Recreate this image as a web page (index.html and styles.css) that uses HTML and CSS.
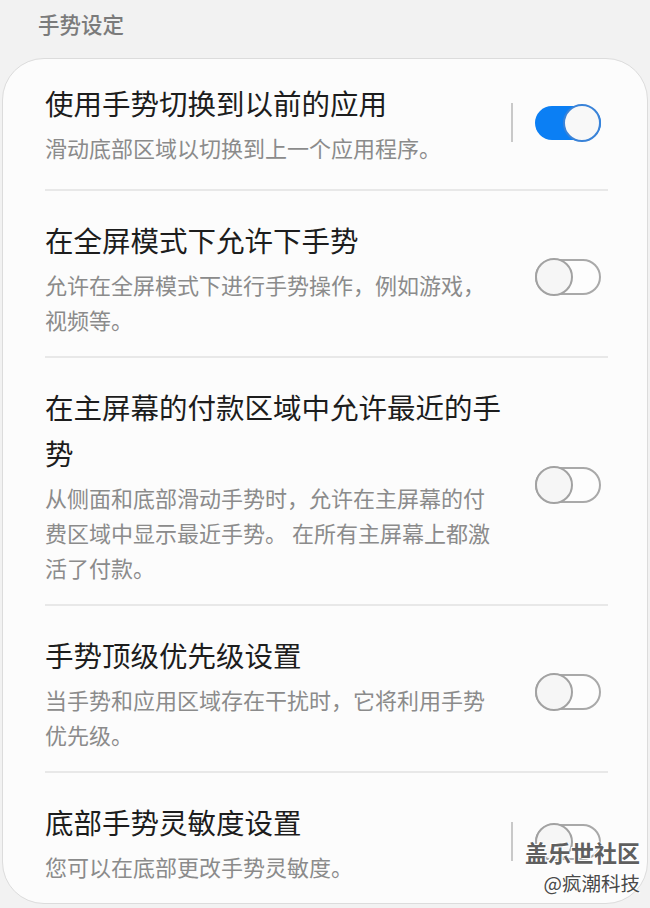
FILE: index.html
```html
<!DOCTYPE html>
<html lang="zh-CN">
<head>
<meta charset="utf-8">
<title>手势设定</title>
<link rel="stylesheet" href="styles.css">
</head>
<body>
<div class="page">
  <div class="section-title">手势设定</div>
  <div class="card">
    <div class="item first">
      <div class="row">
        <div class="text">
          <div class="title">使用手势切换到以前的应用</div>
          <div class="sub">滑动底部区域以切换到上一个应用程序。</div>
        </div>
        <div class="control">
          <span class="vline"></span>
          <span class="switch on"><span class="thumb"></span></span>
        </div>
      </div>
    </div>
    <div class="item">
      <div class="row">
        <div class="text">
          <div class="title">在全屏模式下允许下手势</div>
          <div class="sub">允许在全屏模式下进行手势操作，例如游戏，视频等。</div>
        </div>
        <div class="control">
          <span class="switch off"><span class="thumb"></span></span>
        </div>
      </div>
    </div>
    <div class="item">
      <div class="row">
        <div class="text">
          <div class="title">在主屏幕的付款区域中允许最近的手势</div>
          <div class="sub">从侧面和底部滑动手势时，允许在主屏幕的付费区域中显示最近手势。 在所有主屏幕上都激活了付款。</div>
        </div>
        <div class="control">
          <span class="switch off"><span class="thumb"></span></span>
        </div>
      </div>
    </div>
    <div class="item">
      <div class="row">
        <div class="text">
          <div class="title">手势顶级优先级设置</div>
          <div class="sub">当手势和应用区域存在干扰时，它将利用手势优先级。</div>
        </div>
        <div class="control">
          <span class="switch off"><span class="thumb"></span></span>
        </div>
      </div>
    </div>
    <div class="item last">
      <div class="row">
        <div class="text">
          <div class="title">底部手势灵敏度设置</div>
          <div class="sub">您可以在底部更改手势灵敏度。</div>
        </div>
        <div class="control">
          <span class="vline"></span>
          <span class="switch off"><span class="thumb"></span></span>
        </div>
      </div>
    </div>
  </div>
  <div class="watermark">
    <div class="wm-main">盖乐世社区</div>
    <div class="wm-sub">@疯潮科技</div>
  </div>
</div>
</body>
</html>
```

FILE: styles.css
```css
* { box-sizing: border-box; }

html, body {
  margin: 0;
  padding: 0;
  background: #f2f2f2;
}

body {
  font-family: "Noto Sans CJK SC", "Noto Sans", sans-serif;
  width: 650px;
  height: 908px;
  overflow: hidden;
}

.page {
  position: relative;
  height: 908px;
}

.section-title {
  height: 58px;
  padding: 9px 0 0 38px;
  font-size: 21.5px;
  line-height: 30px;
  font-weight: 500;
  color: #7b7b7b;
}

.card {
  margin: 0 2px;
  background: #fcfcfc;
  border: 1px solid #dcdcdc;
  border-radius: 42px;
}

.item {
  margin: 0 39px 0 42px;
  padding: 26px 0 19px;
  border-bottom: 2px solid #e8e8e8;
}

.item.first {
  padding-top: 21px;
  padding-bottom: 24px;
}

.item.last {
  border-bottom: none;
}

.row {
  display: flex;
  align-items: center;
  padding-right: 7px;
}

.text {
  flex: 1;
  min-width: 0;
}

.title {
  font-size: 28.5px;
  line-height: 46px;
  color: #1d1d1d;
  max-width: 462px;
}

.sub {
  margin-top: 4px;
  font-size: 22px;
  line-height: 35px;
  color: #8b8b8b;
  max-width: 450px;
}

.control {
  width: 96px;
  flex: none;
  display: flex;
  align-items: center;
  justify-content: flex-end;
}

.vline {
  width: 2px;
  height: 39px;
  background: #c9c9c9;
  margin-right: 22px;
}

.switch {
  position: relative;
  display: block;
  width: 66px;
  height: 38px;
}

.switch::before {
  content: "";
  position: absolute;
  left: 0;
  right: 0;
  top: 2px;
  bottom: 2px;
  border-radius: 17px;
}

.switch .thumb {
  position: absolute;
  top: 0;
  width: 38px;
  height: 38px;
  border-radius: 50%;
}

.switch.on::before {
  background: #0b7ff4;
}

.switch.on .thumb {
  right: 0;
  background: #f8f8f8;
  border: 2px solid #3a83d8;
}

.switch.off::before {
  top: 1px;
  bottom: 1px;
  border-radius: 18px;
  background: #fdfdfd;
  border: 2px solid #a9a9a9;
}

.switch.off .thumb {
  left: 0;
  background: #f6f6f6;
  border: 2px solid #a2a2a2;
}

.watermark {
  position: absolute;
  right: 10px;
  top: 836px;
  text-align: right;
}

.wm-main {
  font-size: 23px;
  line-height: 32px;
  font-weight: 700;
  color: #5f5f5f;
  text-shadow: 0 0 2px #fff, 0 0 2px #fff, 1px 1px 0 #fff, -1px -1px 0 #fff;
}

.wm-sub {
  margin-top: 2px;
  font-size: 19.5px;
  line-height: 26px;
  color: #4a4a4a;
  text-shadow: 0 0 2px #fff, 1px 1px 0 #fff, -1px -1px 0 #fff;
}
```
